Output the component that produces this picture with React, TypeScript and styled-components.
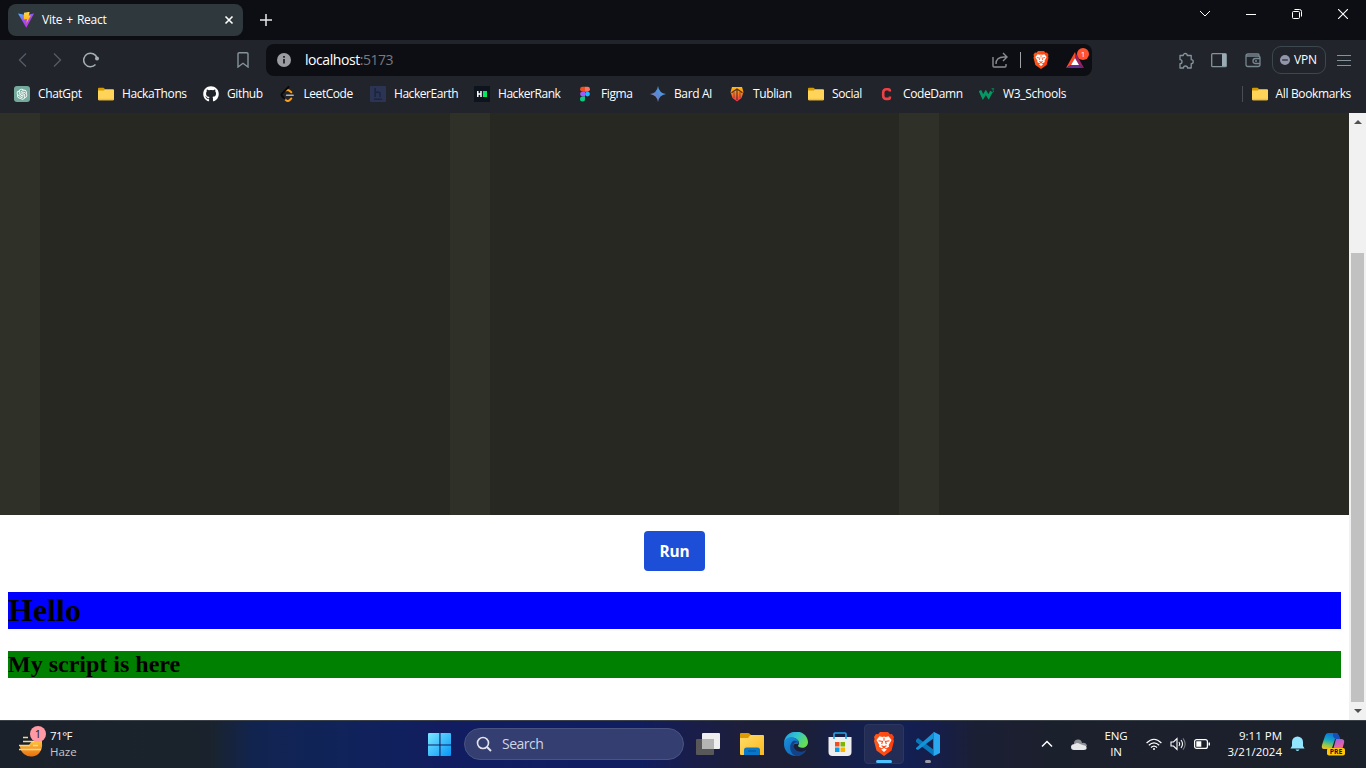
import React from 'react';
import styled, { createGlobalStyle } from 'styled-components';
import { AiOutlineOpenAI } from 'react-icons/ai';
import { FaGithub } from 'react-icons/fa';

const GlobalStyle = createGlobalStyle`
  * { box-sizing: border-box; }
  html, body { margin: 0; padding: 0; overflow: hidden; }
  svg { display: block; flex: none; }
`;

const Screen = styled.div`
  width: 1366px;
  height: 768px;
  display: flex;
  flex-direction: column;
  overflow: hidden;
  background: #fff;
  color: #fff;
  font-family: 'Open Sans', 'Noto Sans', sans-serif;
  font-size: 12px;
  line-height: 16px;
  white-space: nowrap;
`;

const TabStrip = styled.header`
  height: 40px;
  flex: none;
  display: flex;
  align-items: center;
  padding-left: 8px;
  background: #0d0e13;
`;

const Tab = styled.div`
  width: 235px;
  height: 32px;
  display: flex;
  align-items: center;
  padding: 0 9px 0 10px;
  border-radius: 8px;
  background: #2f383d;
`;

const TabTitle = styled.span`
  flex: 1;
  margin-left: 8px;
  letter-spacing: -0.25px;
  word-spacing: 1.2px;
`;

const NewTab = styled.div`
  margin-left: 17px;
`;

const WindowControls = styled.div`
  display: flex;
  align-self: flex-start;
  margin-left: auto;
`;

const WindowButton = styled.div`
  width: 46px;
  height: 28px;
  display: grid;
  place-items: center;
`;

const Toolbar = styled.div`
  height: 40px;
  flex: none;
  display: flex;
  align-items: center;
  background: #21242b;
`;

const Spot = styled.div<{ $w?: number; $gap?: number }>`
  width: ${p => p.$w ?? 16}px;
  height: 24px;
  flex: none;
  display: grid;
  place-items: center;
  margin-left: ${p => p.$gap ?? 0}px;
`;

const AddressBar = styled.div`
  width: 826px;
  height: 32px;
  display: flex;
  align-items: center;
  margin-left: 15px;
  padding-left: 10px;
  border-radius: 8px;
  background: #0d0e13;
`;

const Url = styled.span`
  flex: 1;
  margin-left: 13px;
  font-size: 14px;
  letter-spacing: -0.44px;
`;

const Port = styled.span`
  color: #777a7f;
`;

const Divider = styled.div<{ $left: number; $color: string }>`
  width: 1px;
  height: 16px;
  margin-left: ${p => p.$left}px;
  background: ${p => p.$color};
`;

const RewardsIcon = styled.div`
  position: relative;
  width: 18px;
  height: 16px;
  margin: 0 8px 0 16px;
`;

const RewardsBadge = styled.span`
  position: absolute;
  left: 11px;
  top: -4px;
  width: 12px;
  height: 12px;
  border-radius: 50%;
  background: #ff5330;
  font-size: 8px;
  line-height: 12px;
  text-align: center;
`;

const VpnButton = styled.div`
  width: 54px;
  height: 28px;
  display: flex;
  align-items: center;
  gap: 4px;
  margin-left: 11px;
  padding-left: 7px;
  border: 1px solid #3d474e;
  border-radius: 9px;
  letter-spacing: -0.2px;
`;

const BookmarksBar = styled.nav`
  height: 33px;
  flex: none;
  display: flex;
  align-items: flex-start;
  padding: 5px 0 0 14px;
  background: #21242b;
`;

const Bookmark = styled.div<{ $w?: number; $track?: number }>`
  width: ${p => (p.$w ? `${p.$w}px` : 'auto')};
  height: 18px;
  flex: none;
  display: flex;
  align-items: center;
  gap: 8px;
  letter-spacing: ${p => p.$track ?? -0.38}px;
`;

const AllBookmarks = styled.div`
  display: flex;
  align-items: center;
  gap: 9px;
  margin: 0 15px 0 auto;
`;

const ChatTile = styled.div`
  width: 16px;
  height: 16px;
  display: grid;
  place-items: center;
  border-radius: 3px;
  background: #74a99b;
`;

const Viewport = styled.main`
  height: 607px;
  flex: none;
  display: flex;
`;

const Page = styled.div`
  flex: 1;
  background: #fff;
`;

const Editors = styled.section`
  height: 402px;
  display: grid;
  grid-template-columns: repeat(3, 1fr);
`;

const Editor = styled.div`
  display: flex;
  background: #272822;
`;

const Gutter = styled.div`
  width: 40px;
  background: #2f3129;
`;

const RunButton = styled.button`
  display: block;
  width: 61px;
  height: 40px;
  margin: 16px auto 0;
  padding: 2px 0 0;
  border: 0;
  border-radius: 4px;
  background: #1d4ed8;
  color: #fff;
  font: 700 15.4px/24px 'Open Sans', 'Noto Sans', sans-serif;
  letter-spacing: -0.2px;
`;

const Output = styled.section`
  padding: 21px 8px 0;
  color: #000;
  font-family: 'Liberation Serif', 'Times New Roman', serif;
`;

const Hello = styled.h1`
  height: 37px;
  margin: 0 0 22px;
  background: #00f;
  font-size: 32px;
  line-height: 37px;
`;

const Script = styled.h2`
  height: 27px;
  margin: 0;
  background: #008000;
  font-size: 24px;
  line-height: 27px;
`;

const Scrollbar = styled.div`
  width: 17px;
  display: flex;
  flex-direction: column;
  align-items: center;
  background: #f1f1f1;
`;

const ScrollArrow = styled.div`
  height: 17px;
  display: grid;
  place-items: center;
`;

const Thumb = styled.div`
  width: 13px;
  height: 449px;
  margin: 123px 0 0;
  background: #c1c1c1;
`;

const Taskbar = styled.footer`
  height: 48px;
  flex: none;
  display: flex;
  align-items: center;
  border-top: 1px solid #3b4149;
  background: linear-gradient(90deg, #1b212b 0, #1a232d 210px, #112450 255px, #10235a 340px, #111d60 440px, #101e60 640px, #191d4a 690px, #1d1f38 750px, #1c1f37 800px, #161f4a 850px, #122055 900px, #161e4a 935px, #1b1f35 975px, #1b202d 1050px, #1b212b 100%);
`;

const Weather = styled.div`
  position: relative;
  width: 32px;
  height: 28px;
  margin-left: 18px;
`;

const WeatherBadge = styled.span`
  position: absolute;
  left: 12px;
  top: -5px;
  width: 16px;
  height: 16px;
  border-radius: 50%;
  background: #ff99a4;
  color: #191919;
  font-size: 11px;
  text-align: center;
`;

const WeatherText = styled.div`
  width: 378px;
  margin-bottom: 2px;
  font-size: 11.5px;
  letter-spacing: -0.5px;
`;

const Condition = styled.div`
  color: #c4c7cb;
  letter-spacing: 0;
`;

const SearchBox = styled.div`
  width: 220px;
  height: 32px;
  display: flex;
  align-items: center;
  gap: 10px;
  margin: 0 0 1px 12px;
  padding-left: 11px;
  border: 1px solid #4a5481;
  border-radius: 16px;
  background: #343e70;
  color: #d2d5e3;
  font-size: 14px;
  letter-spacing: -0.5px;
`;

const AppSlot = styled.div<{ $active?: boolean }>`
  position: relative;
  width: 40px;
  height: 40px;
  margin: 0 2px 1px;
  display: grid;
  place-items: center;
  border-radius: 4px;
  border: 1px solid ${p => (p.$active ? '#2d365b' : 'transparent')};
  background: ${p => (p.$active ? '#222c55' : 'transparent')};
`;

const Apps = styled.div`
  display: flex;
  margin-left: 2px;
`;

const Indicator = styled.span<{ $w: number; $color: string }>`
  position: absolute;
  bottom: 0;
  left: 50%;
  width: ${p => p.$w}px;
  height: 3px;
  margin-left: ${p => -p.$w / 2}px;
  border-radius: 2px;
  background: ${p => p.$color};
`;

const Tray = styled.div`
  flex: 1;
  display: flex;
  align-items: center;
  padding: 0 0 1px 91px;
  font-size: 11.5px;
`;

const Language = styled.div`
  width: 28px;
  margin-left: 14px;
  text-align: center;
  letter-spacing: -0.1px;
`;

const Clock = styled.div`
  width: 64px;
  margin: 0 0 1px 8px;
  text-align: right;
  letter-spacing: 0;
`;

const Folder = () => (
  <svg width="16" height="16" viewBox="0 0 16 16">
    <path d="M0 2.7q0-1 1-1h4.5l1.8 1.6v4H0z" fill="#d59b00" />
    <path d="M0 4.4h5.8l1.5-1.2H15q1 0 1 1v9q0 1-1 1H1q-1 0-1-1z" fill="#ffd459" />
    <path d="M0 12.8h16v.5q0 1-1 1H1q-1 0-1-1z" fill="#f3bd3d" />
  </svg>
);

const ViteLogo = () => (
  <svg width="16" height="16" viewBox="0 0 16 16">
    <defs>
      <linearGradient id="vite" x2=".6" y2="1"><stop stopColor="#41bfff" /><stop offset=".5" stopColor="#a04cf5" /><stop offset="1" stopColor="#c331ee" /></linearGradient>
      <linearGradient id="bolt" x2="0" y2="1"><stop stopColor="#ffd84a" /><stop offset="1" stopColor="#ffa600" /></linearGradient>
    </defs>
    <path d="M0 1.5 8 3l8-1.5L8.3 15.7z" fill="url(#vite)" />
    <path d="m6 .8 5.7-1-1 4 2.2-.4-4.5 8 .5-4.5-3.2.5z" fill="url(#bolt)" />
  </svg>
);

const Lion = ({ size, id }: { size: number; id: string }) => (
  <svg width={size} height={size} viewBox="0 0 24 24">
    <defs>
      <linearGradient id={id} x2="1"><stop stopColor="#ff5a1c" /><stop offset="1" stopColor="#ff3c0c" /></linearGradient>
    </defs>
    <path d="M8 0h8l2 2.3 2-.3 2 3-.6 2 .6 2-2.5 9.5L12 24l-7.500-5.500L2 9l.6-2L2 5l2-3 2 .3z" fill={`url(#${id})`} />
    <path d="m7.500 4.300 2.800.6 1.700-.4 1.700.4 2.800-.6 3 3.800-2.800 4.800.3 1.800-2.800 1.500-2.200-1.800-2.200 1.800L7 14.700l.3-1.800-2.800-4.800z" fill="#fff" />
    <path d="m9.200 17.600 2.800-1.700 2.800 1.700-2.800 2.300z" fill="#fff" />
    <path d="m6.500 8.700 4 .8-.8 2.600M17.500 8.700l-4 .8.8 2.600M12 5.700v3M9.500 13.700 12 14.800l2.500-1.100" fill="none" stroke="#ff4b17" strokeWidth="1.1" />
  </svg>
);

const WindowsLogo = () => (
  <svg width="24" height="24" viewBox="0 0 24 24">
    <defs><linearGradient id="win" x2="1" y2="1"><stop stopColor="#7be8ff" /><stop offset="1" stopColor="#0696f8" /></linearGradient></defs>
    <path d="M1 0h10.400v11.400H0V1q0-1 1-1zM12.500 0H22q1 0 1 1v10.400H12.500zM0 12.500h11.400V23H1q-1 0-1-1zM12.500 12.500H23V22q0 1-1 1h-9.500z" fill="url(#win)" />
  </svg>
);

const TaskView = () => (
  <svg width="24" height="22" viewBox="0 0 24 22">
    <rect y="6" width="18" height="16" rx="1" fill="#585858" />
    <rect x="6" width="18" height="16" rx="1" fill="#eee" />
    <path d="M6 6h12v10H6z" fill="#b4b4b5" />
  </svg>
);

const Explorer = () => (
  <svg width="24" height="22" viewBox="0 0 24 22">
    <defs><linearGradient id="folder" x2="1" y2="1"><stop stopColor="#ffdc6b" /><stop offset="1" stopColor="#fab81c" /></linearGradient></defs>
    <path d="M0 1q0-1 1-1h7q1 0 2 1l1 1v5H0z" fill="#db9b05" />
    <path d="M0 5h8l2.500-3H23q1 0 1 1v19H1q-1 0-1-1z" fill="url(#folder)" />
    <path d="M4 22v-5q0-2.500 2.500-2.500h11q2.500 0 2.500 2.500v5z" fill="#0876c9" />
    <path d="M8 18h8" stroke="#055090" />
  </svg>
);

const Edge = () => (
  <svg width="24" height="24" viewBox="0 0 24 24">
    <defs>
      <linearGradient id="edgeTop" x2="1" y2=".5"><stop stopColor="#2295d9" /><stop offset=".5" stopColor="#30c4d3" /><stop offset="1" stopColor="#67dd52" /></linearGradient>
      <linearGradient id="edgeLow" x2="1" y2="1"><stop stopColor="#1990df" /><stop offset="1" stopColor="#0d5aaa" /></linearGradient>
    </defs>
    <path d="M0 11C1-4 23-4 24 10c0 5-5 7-9 5-2-1 0-2 0-4 0-6-12-8-15 0z" fill="url(#edgeTop)" />
    <path d="M0 12C0 6 6 4 11 6c4 2 4 5 3 6-7-2-6 7 0 8 3 1 6 0 8-2-2 4-6 6-10 6-7 0-12-5-12-12z" fill="url(#edgeLow)" />
    <path d="M9 9c-5 4-3 13 3 15 4 0 8-2 10-6-4 3-9 2-11-1-2-2-2-5 0-6 1-1 3-1 3 1 1-3-3-4-5-3z" fill="#12428a" />
  </svg>
);

const Store = () => (
  <svg width="24" height="24" viewBox="0 0 24 24">
    <path d="M0.500 5h23v15q0 4-4 4h-15q-4 0-4-4z" fill="#eee" />
    <path d="M6 7V2q0-1 1-1h10q1 0 1 1v5" fill="none" stroke="#27a6e7" strokeWidth="1.6" />
    <path d="M7 10h4.500v4.500H7z" fill="#f04d23" /><path d="M12.500 10H17v4.500h-4.500z" fill="#7cb600" />
    <path d="M7 15.500h4.500V20H7z" fill="#00a0ee" /><path d="M12.500 15.500H17V20h-4.500z" fill="#fcb400" />
  </svg>
);

const Code = () => (
  <svg width="24" height="24" viewBox="0 0 24 24">
    <path d="m0 8 2-2 16 12v6L0 10z" fill="#0878bd" />
    <path d="M0 16 18 0v6L2 18l-2-1z" fill="#1593d7" />
    <path d="m18 0 6 3v18l-6 3z" fill="#29a8f1" />
    <path d="m17 1 1-1v24l-1-1z" fill="#1683c8" />
  </svg>
);

const Copilot = () => (
  <svg width="26" height="26" viewBox="0 0 26 26">
    <defs>
      <linearGradient id="copLeft" x1=".5" x2=".2" y2="1"><stop stopColor="#0871d9" /><stop offset=".45" stopColor="#18a8c4" /><stop offset=".75" stopColor="#8bc94c" /><stop offset="1" stopColor="#f2bd28" /></linearGradient>
      <linearGradient id="copRight" x2=".4" y2="1"><stop stopColor="#9b59ee" /><stop offset="1" stopColor="#fb698c" /></linearGradient>
    </defs>
    <path d="M7 1h8q2 0 3 3l1 3h-5l-3 9q-1 1-3 1H3q-3 0-2-4l3-9q1-3 3-3z" fill="url(#copLeft)" />
    <path d="M12 1h3q2 0 3 3l1 3h-4q-2 0-3-3z" fill="#174eb7" />
    <path d="m15 7h5q4 0 3 4l-2 7h-9z" fill="url(#copRight)" />
    <rect x="6" y="16" width="18" height="7.400" rx="2" fill="#ffc70a" />
    <text x="15" y="22.400" textAnchor="middle" fontSize="6.800" fontWeight="700" fill="#171717">PRE</text>
  </svg>
);

const bookmarks: { name: string; w: number; icon: React.ReactNode; track?: number }[] = [
  { name: 'ChatGpt', w: 84, icon: <ChatTile><AiOutlineOpenAI size={14} /></ChatTile> },
  { name: 'HackaThons', w: 105, icon: <Folder /> },
  { name: 'Github', w: 76.5, icon: <FaGithub size={16} /> },
  {
    name: 'LeetCode', w: 90.5, track: -0.45, icon: (
      <svg width="16" height="16" viewBox="0 0 16 16" fill="none" strokeWidth="1.9" strokeLinecap="round">
        <path d="M4.500 12.700 5.800 14q2 1.800 4 0l1.500-1.500M6 4.500q1.800-1.300 3.500.2l1.800 1.600" stroke="#ffa116" />
        <path d="M8.500 1 2 7.600q-1 1.200 0 2.400l2.700 2.900" stroke="#080808" />
        <path d="M6.500 9.200h6.700" stroke="#b3b3b3" strokeWidth="1.4" />
      </svg>
    ),
  },
  {
    name: 'HackerEarth', w: 104, track: -0.45, icon: (
      <svg width="16" height="16" viewBox="0 0 16 16"><rect width="16" height="16" rx="1" fill="#2c3454" /><path d="M5.200 2v9M5.200 7q2.400-2 4.800 0v4M4 13.300h8" fill="none" stroke="#1b2441" strokeWidth="1.5" /></svg>
    ),
  },
  {
    name: 'HackerRank', w: 103, track: -0.45, icon: (
      <svg width="16" height="16" viewBox="0 0 16 16"><path fill="#0e141e" d="M0 0h16v16H0z" /><path d="M3.800 5v6M7 5v6M4 8h3" stroke="#fff" strokeWidth="1.5" /><path d="M9 5h4v6H9z" fill="#00ea64" /></svg>
    ),
  },
  {
    name: 'Figma', w: 73, icon: (
      <svg width="16" height="16" viewBox="0 0 16 16"><path d="M8 .8H5.500a2.450 2.450 0 0 0 0 4.900H8z" fill="#f24e1e" /><path d="M8 .8h2.500a2.450 2.450 0 0 1 0 4.900H8z" fill="#ff7262" /><path d="M8 5.700H5.500a2.400 2.400 0 0 0 0 4.800H8z" fill="#a259ff" /><circle cx="10.500" cy="8.100" r="2.450" fill="#1abcfe" /><path d="M8 10.500H5.500A2.500 2.500 0 1 0 8 13z" fill="#0acf83" /></svg>
    ),
  },
  {
    name: 'Bard AI', w: 79, icon: (
      <svg width="16" height="16" viewBox="0 0 16 16"><defs><linearGradient id="bard" x2="1" y1=".8"><stop stopColor="#b07ea7" /><stop offset=".4" stopColor="#5786d5" /><stop offset="1" stopColor="#45adf0" /></linearGradient></defs><path d="M8 0q1 7 8 8-7 1-8 8-1-7-8-8 7-1 8-8" fill="url(#bard)" /></svg>
    ),
  },
  {
    name: 'Tublian', w: 79, icon: (
      <svg width="16" height="16" viewBox="0 0 16 16"><defs><linearGradient id="tub" x2="0" y2="1"><stop stopColor="#ffc000" /><stop offset="1" stopColor="#f52b51" /></linearGradient></defs><path d="M3 1h10l1.500 5-2 6L8 15.500 3.500 12l-2-6z" fill="url(#tub)" /><path d="M8 3v11M2.500 6.800 8 3l5.500 3.800" fill="none" stroke="#542e21" strokeWidth="1.1" /><path d="M5 12V6M11 12V6" stroke="#542e21" strokeWidth=".6" /></svg>
    ),
  },
  { name: 'Social', w: 71, icon: <Folder /> },
  {
    name: 'CodeDamn', w: 100, icon: (
      <svg width="16" height="16" viewBox="0 0 16 16"><path d="M10.900 5.600V5q0-1.700-1.700-1.700H7.400Q4.200 3.300 4.200 6.500v3.200q0 3.200 3.200 3.200h1.800q1.700 0 1.700-1.700v-.7" fill="none" stroke="#ed4145" strokeWidth="2.600" /></svg>
    ),
  },
  {
    name: 'W3_Schools', w: 100, track: -0.3, icon: (
      <svg width="16" height="16" viewBox="0 0 16 16"><path d="m1 4.500 3 6.500 2.800-4.500L9.600 11l2.800-5.500" fill="none" stroke="#059862" strokeWidth="2.800" /><path d="M12.600 2.700h2.200l-1.200 1.500q2.200.4 0 2.500" fill="none" stroke="#07875a" /></svg>
    ),
  },
];

export default function App() {
  return (
    <Screen>
      <GlobalStyle />
      <TabStrip>
        <Tab>
          <ViteLogo />
          <TabTitle>Vite + React</TabTitle>
          <svg width="10" height="10" viewBox="0 0 10 10"><path d="m1.500 1.500 7 7m0-7-7 7" stroke="#fff" strokeWidth="1.600" /></svg>
        </Tab>
        <NewTab><svg width="12" height="12" viewBox="0 0 12 12"><path d="M6 0v12M0 6h12" stroke="#e5e7e9" strokeWidth="1.500" /></svg></NewTab>
        <WindowControls>
          <WindowButton><svg width="12" height="8" viewBox="0 0 12 8"><path d="m1 1 5 5 5-5" fill="none" stroke="#fff" /></svg></WindowButton>
          <WindowButton><svg width="10" height="2" viewBox="0 0 10 2"><path d="M0 1.500h10" stroke="#fff" /></svg></WindowButton>
          <WindowButton><svg width="10" height="10" viewBox="0 0 10 10" fill="none" stroke="#fff"><rect x=".5" y="2.500" width="7" height="7" rx="1" /><path d="M2.500.5h5q2 0 2 2v5" /></svg></WindowButton>
          <WindowButton><svg width="10" height="10" viewBox="0 0 10 10"><path d="m0 0 10 10M10 0 0 10" stroke="#fff" strokeWidth="1.100" /></svg></WindowButton>
        </WindowControls>
      </TabStrip>

      <Toolbar>
        <Spot $gap={15}><svg width="16" height="16" viewBox="0 0 16 16"><path d="M11 1.500 4.500 8l6.500 6.500" fill="none" stroke="#555d64" strokeWidth="1.300" /></svg></Spot>
        <Spot $gap={18}><svg width="16" height="16" viewBox="0 0 16 16"><path d="M5 1.500 11.500 8 5 14.500" fill="none" stroke="#555d64" strokeWidth="1.300" /></svg></Spot>
        <Spot $gap={18}><svg width="16" height="16" viewBox="0 0 16 16"><path d="M12.500 12.600A6.800 6.800 0 1 1 14 6" fill="none" stroke="#a5b0b6" strokeWidth="1.500" /><circle cx="14" cy="6.500" r="2" fill="#a5b0b6" /></svg></Spot>
        <Spot $gap={136}><svg width="16" height="16" viewBox="0 0 16 16"><path d="M3 2q0-1.300 1.300-1.300h7.400Q13 .7 13 2v13l-5-3.700L3 15z" fill="none" stroke="#87939a" strokeWidth="1.400" /></svg></Spot>
        <AddressBar>
          <Spot><svg width="14" height="14" viewBox="0 0 14 14"><circle cx="7" cy="7" r="7" fill="#9b9da2" /><path d="M7 6v4.500M7 3v1.800" stroke="#14151a" strokeWidth="1.600" /></svg></Spot>
          <Url>localhost<Port>:5173</Port></Url>
          <svg width="16" height="16" viewBox="0 0 16 16" fill="none" stroke="#898c91" strokeWidth="1.400"><path d="M1 5v9q0 1 1 1h11q1 0 1-1v-2M4 12q0-7 8-7h3M11 1l4 4-4 4" /></svg>
          <Divider $left={12} $color="#a0a2a5" />
          <Spot $w={18} $gap={11}><Lion size={18} id="lionSmall" /></Spot>
          <RewardsIcon>
            <svg width="18" height="16" viewBox="0 0 18 16"><path d="M9 0 0 16l5-3 4-7z" fill="#ff4724" /><path d="m9 0 9 16-5-3-4-7z" fill="#9e1f63" /><path d="m0 16 5-3h8l5 3z" fill="#662d91" /><path d="m9 6 4 7H5z" fill="#fff" /></svg>
            <RewardsBadge>1</RewardsBadge>
          </RewardsIcon>
        </AddressBar>
        <Spot $gap={86}><svg width="17" height="17" viewBox="0 0 17 17"><path d="M2 3.500h3.200a2 2 0 0 1 4 0h4v4.200a2 2 0 0 1 0 4V16H9.500a2 2 0 0 0-4 0H2v-4.300a2 2 0 0 0 0-4z" fill="none" stroke="#84949b" strokeWidth="1.300" strokeLinejoin="round" /></svg></Spot>
        <Spot $gap={17}><svg width="16" height="16" viewBox="0 0 16 16"><rect x=".7" y="1.700" width="14.600" height="13" rx="1" fill="none" stroke="#84949b" strokeWidth="1.300" /><path d="M11 2h4v12h-4z" fill="#9aabb3" /></svg></Spot>
        <Spot $gap={18}><svg width="16" height="16" viewBox="0 0 16 16" fill="none" stroke="#77878f" strokeWidth="1.300"><path d="M1 4v8.500q0 2 2 2h10q2 0 2-2v-1M1 4q0-2 2-2h10q1 0 1 1v1H1h12q2 0 2 2M15 6.500h-4.500a2.500 2.500 0 0 0 0 5H15zM10 9h2" /></svg></Spot>
        <VpnButton>
          <svg width="10" height="10" viewBox="0 0 10 10"><circle cx="5" cy="5" r="5" fill="#9296ab" /><path d="M2.200 5h5.600" stroke="#21242b" strokeWidth="1.200" /></svg>
          VPN
        </VpnButton>
        <Spot $gap={10}><svg width="14" height="12" viewBox="0 0 14 12"><path d="M0 1.500h14M0 6.500h14M0 11.500h14" stroke="#84949b" strokeWidth="1.100" /></svg></Spot>
      </Toolbar>

      <BookmarksBar>
        {bookmarks.map(b => <Bookmark key={b.name} $w={b.w} $track={b.track}>{b.icon}{b.name}</Bookmark>)}
        <AllBookmarks>
          <Divider $left={0} $color="#4a4d53" />
          <Bookmark $track={-0.35}><Folder />All Bookmarks</Bookmark>
        </AllBookmarks>
      </BookmarksBar>

      <Viewport>
        <Page>
          <Editors>
            <Editor><Gutter /></Editor>
            <Editor><Gutter /></Editor>
            <Editor><Gutter /></Editor>
          </Editors>
          <RunButton>Run</RunButton>
          <Output>
            <Hello>Hello</Hello>
            <Script>My script is here</Script>
          </Output>
        </Page>
        <Scrollbar>
          <ScrollArrow><svg width="8" height="4" viewBox="0 0 8 4"><path d="m0 4 4-4 4 4z" fill="#505050" /></svg></ScrollArrow>
          <Thumb />
          <ScrollArrow><svg width="8" height="4" viewBox="0 0 8 4"><path d="m0 0 4 4 4-4z" fill="#505050" /></svg></ScrollArrow>
        </Scrollbar>
      </Viewport>

      <Taskbar>
        <Weather>
          <svg width="26" height="26" viewBox="0 0 26 26">
            <defs><linearGradient id="sun" x2="0" y2="1"><stop stopColor="#ffc43c" /><stop offset="1" stopColor="#e96f0c" /></linearGradient></defs>
            <path d="M2 14h9l3-4h10v3a11 11 0 0 1-22 3z" fill="url(#sun)" />
            <path d="M5 6.500h5M5 10.500h11M1 14.500h11m3 0h5M1 18.500h22" stroke="#f4d795" strokeWidth="1.700" />
          </svg>
          <WeatherBadge>1</WeatherBadge>
        </Weather>
        <WeatherText>71°F<Condition>Haze</Condition></WeatherText>
        <WindowsLogo />
        <SearchBox>
          <svg width="16" height="16" viewBox="0 0 16 16"><circle cx="7" cy="7" r="5.500" fill="none" stroke="#e2e4ef" strokeWidth="1.600" /><path d="m11 11 4 4" stroke="#e2e4ef" strokeWidth="2" /></svg>
          Search
        </SearchBox>
        <Apps>
          <AppSlot><TaskView /></AppSlot>
          <AppSlot><Explorer /></AppSlot>
          <AppSlot><Edge /></AppSlot>
          <AppSlot><Store /></AppSlot>
          <AppSlot $active><Lion size={24} id="lionLarge" /><Indicator $w={16} $color="#4cc2ff" /></AppSlot>
          <AppSlot><Code /><Indicator $w={6} $color="#9b9ba7" /></AppSlot>
        </Apps>
        <Tray>
          <svg width="12" height="8" viewBox="0 0 12 8"><path d="m1 6.500 5-5 5 5" fill="none" stroke="#fff" strokeWidth="1.500" /></svg>
          <Spot $gap={17} $w={18}><svg width="16" height="11" viewBox="0 0 16 11"><path d="M3 5a4 4 0 0 1 8-1q4-1 5 3l-5 2-8-4z" fill="#8d8f94" /><path d="M0 8q0-3 4-3 2-2 5 0l6 2q2 4-2 4H3q-3 0-3-3z" fill="#e6e7e8" /></svg></Spot>
          <Language>ENG<br />IN</Language>
          <Spot $gap={16}><svg width="16" height="13" viewBox="0 0 16 13" fill="none" stroke="#fff" strokeWidth="1.200"><path d="M.6 5Q8-2.500 15.400 5M2.800 7.300q5.200-5 10.400 0M5 9.500q3-2.700 6 0" /><circle cx="8" cy="11" r="1" fill="#fff" stroke="none" /></svg></Spot>
          <Spot $gap={8}><svg width="16" height="14" viewBox="0 0 16 14" fill="none" stroke="#fff" strokeWidth="1.100"><path d="M1 5h2.500L7 1.500v11L3.500 9H1zM9 5q1.500 2 0 4M11 3q3 4 0 8" /><path d="M13 1.300q4.300 5.700 0 11.400" stroke="#777b83" /></svg></Spot>
          <Spot $gap={8}><svg width="16" height="10" viewBox="0 0 16 10"><rect x=".6" y=".6" width="12.800" height="8.800" rx="2" fill="none" stroke="#fff" strokeWidth="1.200" /><path d="M2.300 2.300h5v5.400h-5zM14.500 3.500H16v3h-1.500z" fill="#fff" /></svg></Spot>
          <Clock>9:11 PM<br />3/21/2024</Clock>
          <Spot $gap={7}><svg width="15" height="16" viewBox="0 0 15 16"><path d="M2 10V6a5.500 5.500 0 0 1 11 0v4l1.500 2.500H.5zM5.500 13.500h4q-2 3-4 0" fill="#92e5ff" /></svg></Spot>
          <Spot $gap={16} $w={26}><Copilot /></Spot>
        </Tray>
      </Taskbar>
    </Screen>
  );
}
